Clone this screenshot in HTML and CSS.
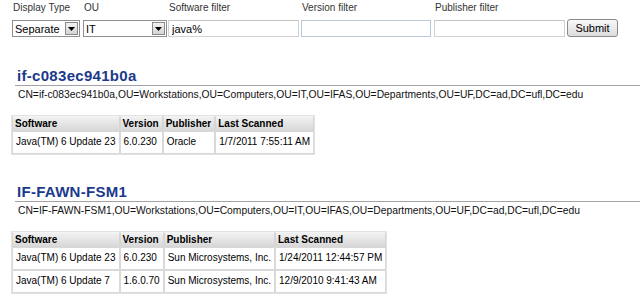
FILE: index.html
```html
<!DOCTYPE html>
<html lang="en">
<head>
  <meta charset="UTF-8">
  <title>Software Inventory</title>
  <link rel="stylesheet" href="styles.css">
</head>
<body>
  <form class="filters">
    <div class="field field-type">
      <label for="displayType">Display Type</label>
      <div class="select-box type-select">
        <select id="displayType">
          <option>Separate</option>
          <option>Combined</option>
        </select>
        <span class="drop-btn">
          <svg width="7" height="4" viewBox="0 0 7 4"><path d="M0 0h7L3.5 4z" fill="#000"/></svg>
        </span>
      </div>
    </div>
    <div class="field field-ou">
      <label for="ou">OU</label>
      <div class="select-box ou-select">
        <select id="ou">
          <option>IT</option>
          <option>IFAS</option>
        </select>
        <span class="drop-btn">
          <svg width="7" height="4" viewBox="0 0 7 4"><path d="M0 0h7L3.5 4z" fill="#000"/></svg>
        </span>
      </div>
    </div>
    <div class="field field-text">
      <label for="softwareFilter">Software filter</label>
      <input type="text" id="softwareFilter" value="java%">
    </div>
    <div class="field field-text">
      <label for="versionFilter">Version filter</label>
      <input type="text" id="versionFilter" class="focused">
    </div>
    <div class="field field-text">
      <label for="publisherFilter">Publisher filter</label>
      <input type="text" id="publisherFilter">
    </div>
    <div class="field">
      <label>&nbsp;</label>
      <button type="button" class="submit-btn">Submit</button>
    </div>
  </form>

  <div class="computer">
    <h2>if-c083ec941b0a</h2>
    <p class="dn">CN=if-c083ec941b0a,OU=Workstations,OU=Computers,OU=IT,OU=IFAS,OU=Departments,OU=UF,DC=ad,DC=ufl,DC=edu</p>
    <table class="software">
      <tr>
        <th>Software</th>
        <th>Version</th>
        <th>Publisher</th>
        <th>Last Scanned</th>
      </tr>
      <tr>
        <td>Java(TM) 6 Update 23</td>
        <td>6.0.230</td>
        <td>Oracle</td>
        <td>1/7/2011 7:55:11 AM</td>
      </tr>
    </table>
  </div>

  <div class="computer">
    <h2>IF-FAWN-FSM1</h2>
    <p class="dn">CN=IF-FAWN-FSM1,OU=Workstations,OU=Computers,OU=IT,OU=IFAS,OU=Departments,OU=UF,DC=ad,DC=ufl,DC=edu</p>
    <table class="software">
      <tr>
        <th>Software</th>
        <th>Version</th>
        <th>Publisher</th>
        <th>Last Scanned</th>
      </tr>
      <tr>
        <td>Java(TM) 6 Update 23</td>
        <td>6.0.230</td>
        <td>Sun Microsystems, Inc.</td>
        <td>1/24/2011 12:44:57 PM</td>
      </tr>
      <tr>
        <td>Java(TM) 6 Update 7</td>
        <td>1.6.0.70</td>
        <td>Sun Microsystems, Inc.</td>
        <td>12/9/2010 9:41:43 AM</td>
      </tr>
    </table>
  </div>
</body>
</html>
```

FILE: styles.css
```css
body {
  margin: 0;
  padding: 0;
  font-family: "Liberation Sans", Arial, sans-serif;
  font-size: 10px;
  color: #000;
  background: #fff;
}

/* filter bar */
.filters {
  display: flex;
  padding: 2px 0 0 12px;
  margin: 0;
}

.field {
  display: flex;
  flex-direction: column;
}

.field-type {
  width: 71px;
}

.field-ou {
  width: 85px;
}

.field-text {
  width: 133px;
}

.field-text:first-of-type {
  width: 134px;
}

.field label {
  height: 12px;
  line-height: 12px;
  margin-bottom: 6px;
  padding-left: 1px;
  color: #333;
}

.select-box {
  display: flex;
  height: 17px;
  border: 1px solid #8e8e8e;
  box-sizing: border-box;
  background: #fff;
}

.type-select {
  width: 68px;
}

.ou-select {
  width: 84px;
}

.select-box select {
  appearance: none;
  -webkit-appearance: none;
  border: none;
  outline: none;
  background: transparent;
  font-family: inherit;
  font-size: 11px;
  color: #000;
  padding: 0 0 0 2px;
  margin: 0;
  flex-grow: 1;
  min-width: 0;
}

.drop-btn {
  width: 13px;
  margin: 1px;
  display: flex;
  align-items: center;
  justify-content: center;
  background: linear-gradient(#f2f2f2, #d4d4d4);
  border: 1px solid #8a8a8a;
  box-sizing: border-box;
}

.field input[type="text"] {
  width: 131px;
  height: 17px;
  box-sizing: border-box;
  border: 1px solid #d2d2d2;
  border-top-color: #c4c4c4;
  padding: 0 3px;
  font-family: inherit;
  font-size: 11px;
  margin: 0;
}

.field input.focused {
  width: 130px;
  border-color: #b8c9dd;
}

.submit-btn {
  margin-top: -1px;
  width: 51px;
  height: 18px;
  font-family: inherit;
  font-size: 11px;
  color: #000;
  border: 1px solid #8a8a8a;
  border-radius: 3px;
  background: linear-gradient(#f8f8f8, #dcdcdc);
  padding: 0;
  cursor: pointer;
}

/* computer sections */
.computer {
  margin-top: 30px;
}

.computer + .computer {
  margin-top: 28px;
}

.computer h2 {
  margin: 0 0 0 15px;
  padding: 0 0 0 2px;
  font-size: 15px;
  line-height: 18px;
  letter-spacing: 0.3px;
  color: #1b3a8c;
  border-bottom: 1px solid #a3a3a3;
}

.dn {
  margin: 3px 0 14px 18px;
  font-size: 10.3px;
  line-height: 12px;
  color: #111;
}

.software {
  margin-left: 11px;
  border-collapse: separate;
  border-spacing: 0;
  border: 1px solid #e2e2e2;
}

.software th {
  text-align: left;
  font-weight: bold;
  line-height: 12px;
  padding: 1px 3px 0 2px;
  background: linear-gradient(#f1f1f1, #d9d9d9);
  border: 1px solid #d6d6d6;
  border-top-color: #f4f4f4;
  white-space: nowrap;
}

.software td {
  line-height: 12px;
  padding: 4px 3px 5px 3px;
  background: #fff;
  border: 1px solid #d9d9d9;
  white-space: nowrap;
}
```
